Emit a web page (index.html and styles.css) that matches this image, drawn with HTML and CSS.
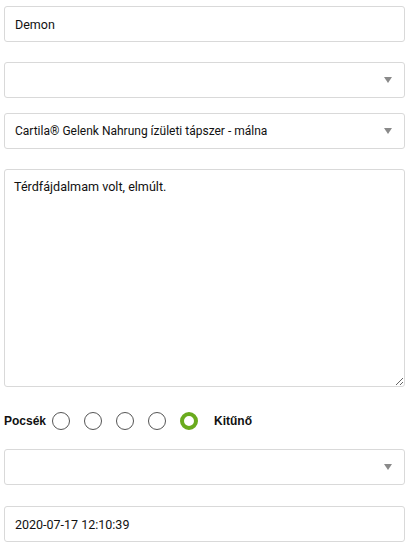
FILE: index.html
```html
<!DOCTYPE html>
<html lang="hu">
<head>
<meta charset="utf-8">
<link rel="stylesheet" href="styles.css">
</head>
<body>
<form class="form">
  <div class="field field-name"><span class="value">Demon</span></div>
  <div class="field select field-s1"><span class="value"></span>
    <svg class="arrow" width="8" height="6" viewBox="0 0 8 6"><path d="M0 0H8L4 6Z" fill="#8a8a8a"/></svg></div>
  <div class="field select field-s2"><span class="value value-sm">Cartila® Gelenk Nahrung ízületi tápszer - málna</span>
    <svg class="arrow" width="8" height="6" viewBox="0 0 8 6"><path d="M0 0H8L4 6Z" fill="#8a8a8a"/></svg></div>
  <textarea class="area">Térdfájdalmam volt, elmúlt.</textarea>
  <div class="rating">
    <span class="label">Pocsék</span>
    <span class="radio radio-first"></span>
    <span class="radio"></span>
    <span class="radio"></span>
    <span class="radio"></span>
    <span class="radio checked"></span>
    <span class="label label-end">Kitűnő</span>
  </div>
  <div class="field select field-s3"><span class="value"></span>
    <svg class="arrow" width="8" height="6" viewBox="0 0 8 6"><path d="M0 0H8L4 6Z" fill="#8a8a8a"/></svg></div>
  <div class="field field-date"><span class="value">2020-07-17 12:10:39</span></div>
</form>
</body>
</html>
```
FILE: styles.css
```css
html, body { margin: 0; padding: 0; background: #fff; }
body { font-family: Roboto, "Liberation Sans", Arial, sans-serif; color: #111; }
.form { display: flex; flex-direction: column; padding: 6px 4px 0 4px; }
.field {
  box-sizing: border-box;
  height: 36px;
  border: 1px solid #d9d9d9;
  border-radius: 3px;
  display: flex;
  align-items: center;
  padding: 0 10px;
  font-size: 12.5px;
  background: #fff;
}
.value { flex: 1; white-space: nowrap; }
.value-sm { font-size: 12px; }
.select .arrow { margin-right: 2px; }
.field-s1 { margin-top: 20px; }
.field-s2 { margin-top: 15px; }
.area {
  box-sizing: border-box;
  margin: 20px 0 0 0;
  height: 218px;
  width: 100%;
  border: 1px solid #d9d9d9;
  border-radius: 3px;
  padding: 9px 9px;
  font-family: Roboto, "Liberation Sans", Arial, sans-serif;
  font-size: 12.6px;
  color: #111;
  resize: vertical;
  display: block;
}
.rating {
  display: flex;
  align-items: center;
  height: 20px;
  margin-top: 24px;
}
.label { font-family: "Liberation Sans", Arial, sans-serif; font-weight: bold; font-size: 12px; color: #111; }
.radio {
  box-sizing: border-box;
  width: 18px; height: 18px;
  border: 1px solid #555;
  border-radius: 50%;
  margin-left: 14px;
}
.radio-first { margin-left: 6px; }
.radio.checked { border: 4px solid #6aab1d; }
.label-end { margin-left: 16px; }
.field-s3 { margin-top: 18px; }
.field-date { margin-top: 21px; }
```
